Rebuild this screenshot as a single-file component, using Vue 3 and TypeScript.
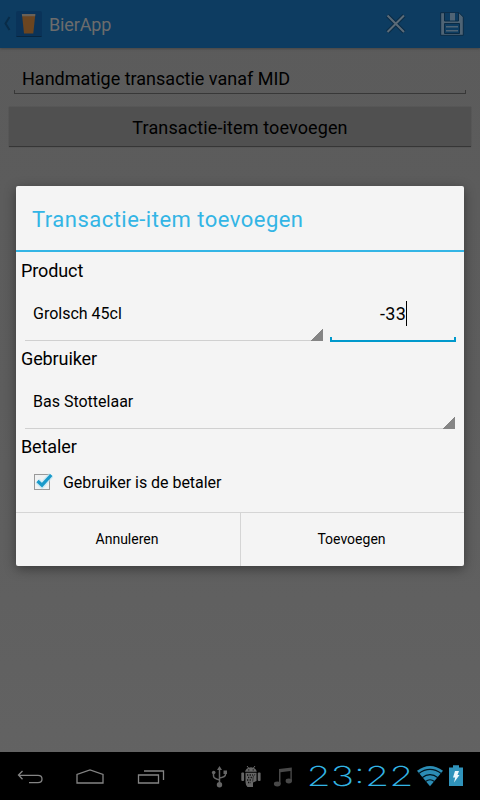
<script setup lang="ts">
import { ref } from 'vue'

const description = ref('Handmatige transactie vanaf MID')
const product = ref('Grolsch 45cl')
const amount = ref('-33')
const user = ref('Bas Stottelaar')
const userPays = ref(true)
</script>

<template>
  <div class="screen">
    <header class="bar">
      <svg class="up" width="8" height="16" viewBox="0 0 8 16"><path d="M6.5 1 L2.5 7.5 L6.5 14" /></svg>
      <svg class="logo" width="26" height="26" viewBox="0 0 26 26">
        <rect width="26" height="26" rx="2" fill="#0a3359" />
        <path d="M0 24.5 Q0 26 2 26 H24 Q26 26 26 24.5 V25 H0Z" fill="#08253e" />
        <path d="M6 3.5 H19.3 L17.3 22.6 H8Z" fill="#6b4520" />
        <path d="M5.8 3 H19.4 L19.1 5.3 H6.1Z" fill="#696158" />
      </svg>
      <h1>BierApp</h1>
      <svg class="close" width="20" height="20" viewBox="0 0 20 20">
        <path class="edge" d="M1.5 1.5 L18 18 M18 1.5 L1.5 18" /><path d="M1.5 1.5 L18 18 M18 1.5 L1.5 18" />
      </svg>
      <svg class="save" width="24" height="24" viewBox="0 0 24 24">
        <path d="M.7 .7 H19 L23.3 5 V23.3 H.7Z" fill="#4f6475" stroke="#0a2b45" />
        <path d="M4.5 1 V9 H18.5 V1" fill="#0d3c61" stroke="#0a2b45" />
        <rect x="10" y="1" width="5" height="7.5" fill="#4f6475" />
        <path d="M4.5 21.5 V11.5 H19.5 V21.5Z" fill="#0d3c61" stroke="#0a2b45" />
        <path d="M6 14.7 H18 M6 18.7 H18" stroke="#4f6475" stroke-width="1.4" />
      </svg>
    </header>

    <main>
      <div class="field"><span>{{ description }}</span></div>
      <button class="add">Transactie-item toevoegen</button>
    </main>

    <div class="overlay">
      <section class="dialog">
        <h2>Transactie-item toevoegen</h2>
        <div class="body">
          <label>Product</label>
          <div class="row">
            <div class="spinner"><span>{{ product }}</span></div>
            <div class="amount"><span>{{ amount }}</span><i class="caret"></i></div>
          </div>
          <label>Gebruiker</label>
          <div class="row user"><div class="spinner"><span>{{ user }}</span></div></div>
          <label>Betaler</label>
          <div class="check" @click="userPays = !userPays">
            <svg width="22" height="22" viewBox="0 0 22 22">
              <rect x="3.5" y="3.5" width="15" height="15" fill="#f0f2f3" stroke="#999" />
              <g v-if="userPays">
                <path class="glow" d="M6.5 10 L11 14.2 L20.3 4" /><path class="tick" d="M6.5 10 L11 14.2 L20.3 4" />
              </g>
            </svg>
            <span>Gebruiker is de betaler</span>
          </div>
        </div>
        <footer>
          <button class="cancel">Annuleren</button>
          <button class="confirm">Toevoegen</button>
        </footer>
      </section>
    </div>

    <nav>
      <svg class="keys" width="180" height="48" viewBox="0 0 180 48">
        <path d="M22.5 19 L18.5 23 L22.5 27.3 M18.5 23.3 H38 Q42 23.3 42 27 Q42 30.7 38 30.7 H29" />
        <path d="M77 31 V22.5 L90 18 L103 22.5 V31Z" />
        <path d="M138.5 23 H158.5 V31 H138.5Z M144 19 H163.5 V28" />
      </svg>
      <svg class="status" width="122" height="48" viewBox="180 0 122 48">
        <g fill="none" stroke="#666" stroke-width="1.5">
          <path d="M219.5 16 V32 M213.5 20 V24 Q213.5 26.5 219.5 28 M225.5 20 V22.5 Q225.5 25 219.5 26" />
        </g>
        <g fill="#666">
          <path d="M219.5 14 L222 18 H217Z" /><circle cx="219.5" cy="32.7" r="2.7" /><circle cx="213.7" cy="20.5" r="1.8" /><rect x="223.5" y="18.5" width="3.5" height="3.5" />
          <path d="M245 19.8 Q246 15.5 251 15.2 Q256 15.5 256.8 19.8Z" />
          <path d="M247 14 L249 16.5 M255 14 L253 16.5" stroke="#666" />
          <rect x="241.3" y="20.5" width="2.8" height="8.5" rx="1" /><rect x="257.8" y="20.5" width="2.8" height="8.5" rx="1" />
          <path d="M245.5 20.8 H256.5 V29 L253 30.5 V35 H247.5 Q245.5 33 245.5 30Z" />
          <path d="M279 17 L291.8 15.5 V29 H290.4 V19 L280.5 20.2 V32 H279Z" fill="#484848" />
          <ellipse cx="277.3" cy="32" rx="3.4" ry="2.4" fill="#484848" /><ellipse cx="288.8" cy="29" rx="3.2" ry="2.4" fill="#484848" />
        </g>
        <path d="M247 23 H253 M248 25.5 H252 M247 28 H252 M248 30.5 H251" stroke="#111" stroke-width="1.3" stroke-dasharray="1.3 1.3" />
        <path d="M255 22 Q252.5 24 252.7 29.5" stroke="#222" stroke-width=".8" fill="none" />
        <circle cx="248.8" cy="17.9" r=".6" fill="#000" /><circle cx="253.2" cy="17.9" r=".6" fill="#000" />
      </svg>
      <svg class="clock" width="112" height="48" viewBox="302 0 112 48">
        <text x="306.5" y="34" textLength="107" lengthAdjust="spacingAndGlyphs">23:22</text>
      </svg>
      <svg class="power" width="66" height="48" viewBox="414 0 66 48">
        <path d="M417 18.8 Q430 9.3 443 18.8 L430 34.3Z" fill="#2c8db5" />
        <g fill="none" stroke="#00141d" stroke-width="1.2">
          <path d="M418.5 21.7 Q430 13.2 441.5 21.7 M422 25.7 Q430 19.7 438 25.7 M425.5 29.5 Q430 26 434.5 29.5" />
        </g>
        <path d="M449 15.5 H453 V13.2 H459 V15.5 H463 V34 H449Z" fill="#3093bb" />
        <path d="M455 19 H459 L457.5 23 H459.5 L454 30.5 L455.2 25.5 H453Z" fill="#eef8fc" />
      </svg>
    </nav>
  </div>
</template>

<style>
body { margin: 0; background: #000; }
</style>

<style scoped>
.screen { position: relative; display: flex; flex-direction: column; width: 480px; height: 800px; overflow: hidden; font-family: Roboto, "Liberation Sans", sans-serif; color: #000; background: linear-gradient(#5b5b5b, #5d5d5d 50%, #636363); }
button { border: 0; background: none; padding: 0; font-family: inherit; color: inherit; }
h1, h2 { margin: 0; font-weight: 400; }
.bar { box-sizing: border-box; display: flex; align-items: center; height: 48px; flex: none; padding-left: 3px; background: #0d3c61; box-shadow: 0 1px 2px #3338; }
.up { fill: none; stroke: #092c48; stroke-width: 2; margin-right: 5px; }
.bar h1 { flex: 1; margin: 0 0 0 7px; font-size: 18px; letter-spacing: -.15px; color: #6c6c6c; }
.close { fill: none; stroke: #5b6b78; stroke-width: 2; margin-right: 34px; }
.close .edge { stroke: #0a2b45; stroke-width: 4; }
.save { margin-right: 16px; }
main { flex: 1; }
.field { box-sizing: border-box; height: 38px; margin: 8px 14px 0; padding: 0 8px; font-size: 18px; line-height: 46px; background: linear-gradient(#383838, #383838) bottom / 100% 1px no-repeat, linear-gradient(#383838, #383838) left bottom / 1px 4px no-repeat, linear-gradient(#383838, #383838) right bottom / 1px 4px no-repeat; }
.add { display: block; width: 462px; height: 40px; margin: 13px 9px 0; padding-top: 2px; font-size: 18px; letter-spacing: .12px; background: #505050; border-bottom: 1px solid #363636; box-shadow: 0 0 1px #444; }
.overlay { position: absolute; inset: 0 0 48px; display: flex; align-items: center; justify-content: center; }
.dialog { display: flex; flex-direction: column; width: 448px; height: 380px; border-radius: 2px; background: #f4f4f4; box-shadow: 0 3px 12px #0006; }
.dialog h2 { box-sizing: border-box; height: 66px; padding: 2px 16px 0; border-bottom: 2px solid #33b5e5; color: #33b5e5; font-size: 22px; line-height: 64px; letter-spacing: .48px; }
.body { flex: 1; padding: 1px 5px 0; }
.body label { display: block; height: 36px; font-size: 18px; line-height: 36px; letter-spacing: -.1px; }
.row { display: flex; height: 52px; padding: 0 3px 0 4px; gap: 7px; }
.row.user { padding-right: 4px; }
.spinner { box-sizing: border-box; flex: 1; padding-left: 8px; font-size: 16px; line-height: 50px; background: linear-gradient(135deg, transparent 50%, #858585 50%) right bottom / 12px 12px no-repeat, linear-gradient(#d0d0d0, #d0d0d0) bottom / 100% 1px no-repeat; }
.amount { box-sizing: border-box; display: flex; align-items: center; width: 126px; height: 53px; padding: 0 0 4px 50px; font-size: 18px; letter-spacing: .3px; background: linear-gradient(#0099cc, #0099cc) bottom / 100% 2px no-repeat, linear-gradient(#0099cc, #0099cc) left bottom / 2px 5px no-repeat, linear-gradient(#0099cc, #0099cc) right bottom / 2px 5px no-repeat; }
.caret { width: 1px; height: 25px; background: #000; }
.check { display: flex; align-items: center; height: 34px; padding-left: 10px; font-size: 16px; }
.check span { margin-left: 10px; letter-spacing: -.03px; }
.tick, .glow { fill: none; stroke: #1a9aca; stroke-width: 3.2; }
.glow { stroke: #b8e4f5; stroke-width: 6; opacity: .6; }
footer { display: flex; height: 53px; border-top: 1px solid #d5d5d5; }
footer button { width: 224px; padding: 0 2px 2px 0; font-size: 14px; }
.confirm { box-sizing: border-box; border-left: 1px solid #d5d5d5; }
nav { display: flex; height: 48px; flex: none; background: #000; }
.keys { fill: none; stroke: #848484; stroke-width: 1.3; }
.clock text { font-family: Inter, sans-serif; font-size: 27.5px; font-weight: 200; fill: #33b5e5; }
</style>
